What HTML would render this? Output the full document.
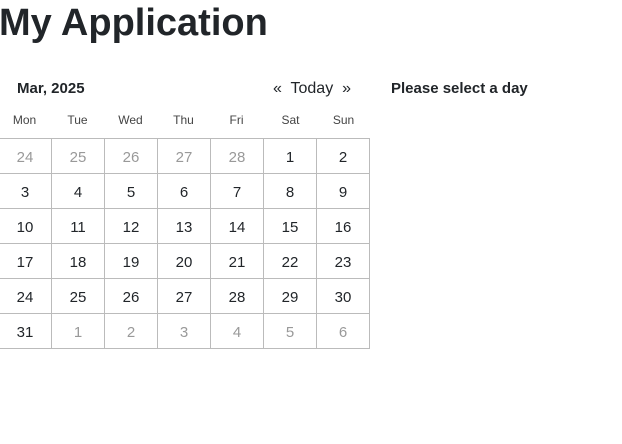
<!DOCTYPE html>
<html><head><meta charset="utf-8"><style>
body{margin:0;width:622px;height:444px;background:#fff;font-family:"Liberation Sans",sans-serif;color:#212529;position:relative;overflow:hidden}
h1{position:absolute;left:-1px;top:0px;margin:0;font-size:38px;font-weight:bold;line-height:46px}
.abs{position:absolute;white-space:nowrap}
table{position:absolute;left:-2px;top:138px;border-collapse:collapse}
td{width:52px;height:32px;border:1px solid #bbb;text-align:center;font-size:15px;padding:2px 0 0 0}
td.o{color:#999}
.dn{position:absolute;top:113px;font-size:12px;color:#444;width:53px;text-align:center}
</style></head><body>
<h1>My Application</h1>
<div class="abs" style="left:17px;top:80px;font-size:15px;font-weight:bold">Mar, 2025</div>
<div class="abs" style="left:273px;top:80px;font-size:16px">«&nbsp; Today &nbsp;»</div>
<div class="abs" style="left:391px;top:80px;font-size:15px;font-weight:bold">Please select a day</div>
<div class="dn" style="left:-2px">Mon</div><div class="dn" style="left:51px">Tue</div><div class="dn" style="left:104px">Wed</div><div class="dn" style="left:157px">Thu</div><div class="dn" style="left:210px">Fri</div><div class="dn" style="left:264px">Sat</div><div class="dn" style="left:317px">Sun</div>
<table>
<tr><td class="o">24</td><td class="o">25</td><td class="o">26</td><td class="o">27</td><td class="o">28</td><td>1</td><td>2</td></tr>
<tr><td>3</td><td>4</td><td>5</td><td>6</td><td>7</td><td>8</td><td>9</td></tr>
<tr><td>10</td><td>11</td><td>12</td><td>13</td><td>14</td><td>15</td><td>16</td></tr>
<tr><td>17</td><td>18</td><td>19</td><td>20</td><td>21</td><td>22</td><td>23</td></tr>
<tr><td>24</td><td>25</td><td>26</td><td>27</td><td>28</td><td>29</td><td>30</td></tr>
<tr><td>31</td><td class="o">1</td><td class="o">2</td><td class="o">3</td><td class="o">4</td><td class="o">5</td><td class="o">6</td></tr>
</table>
</body></html>
